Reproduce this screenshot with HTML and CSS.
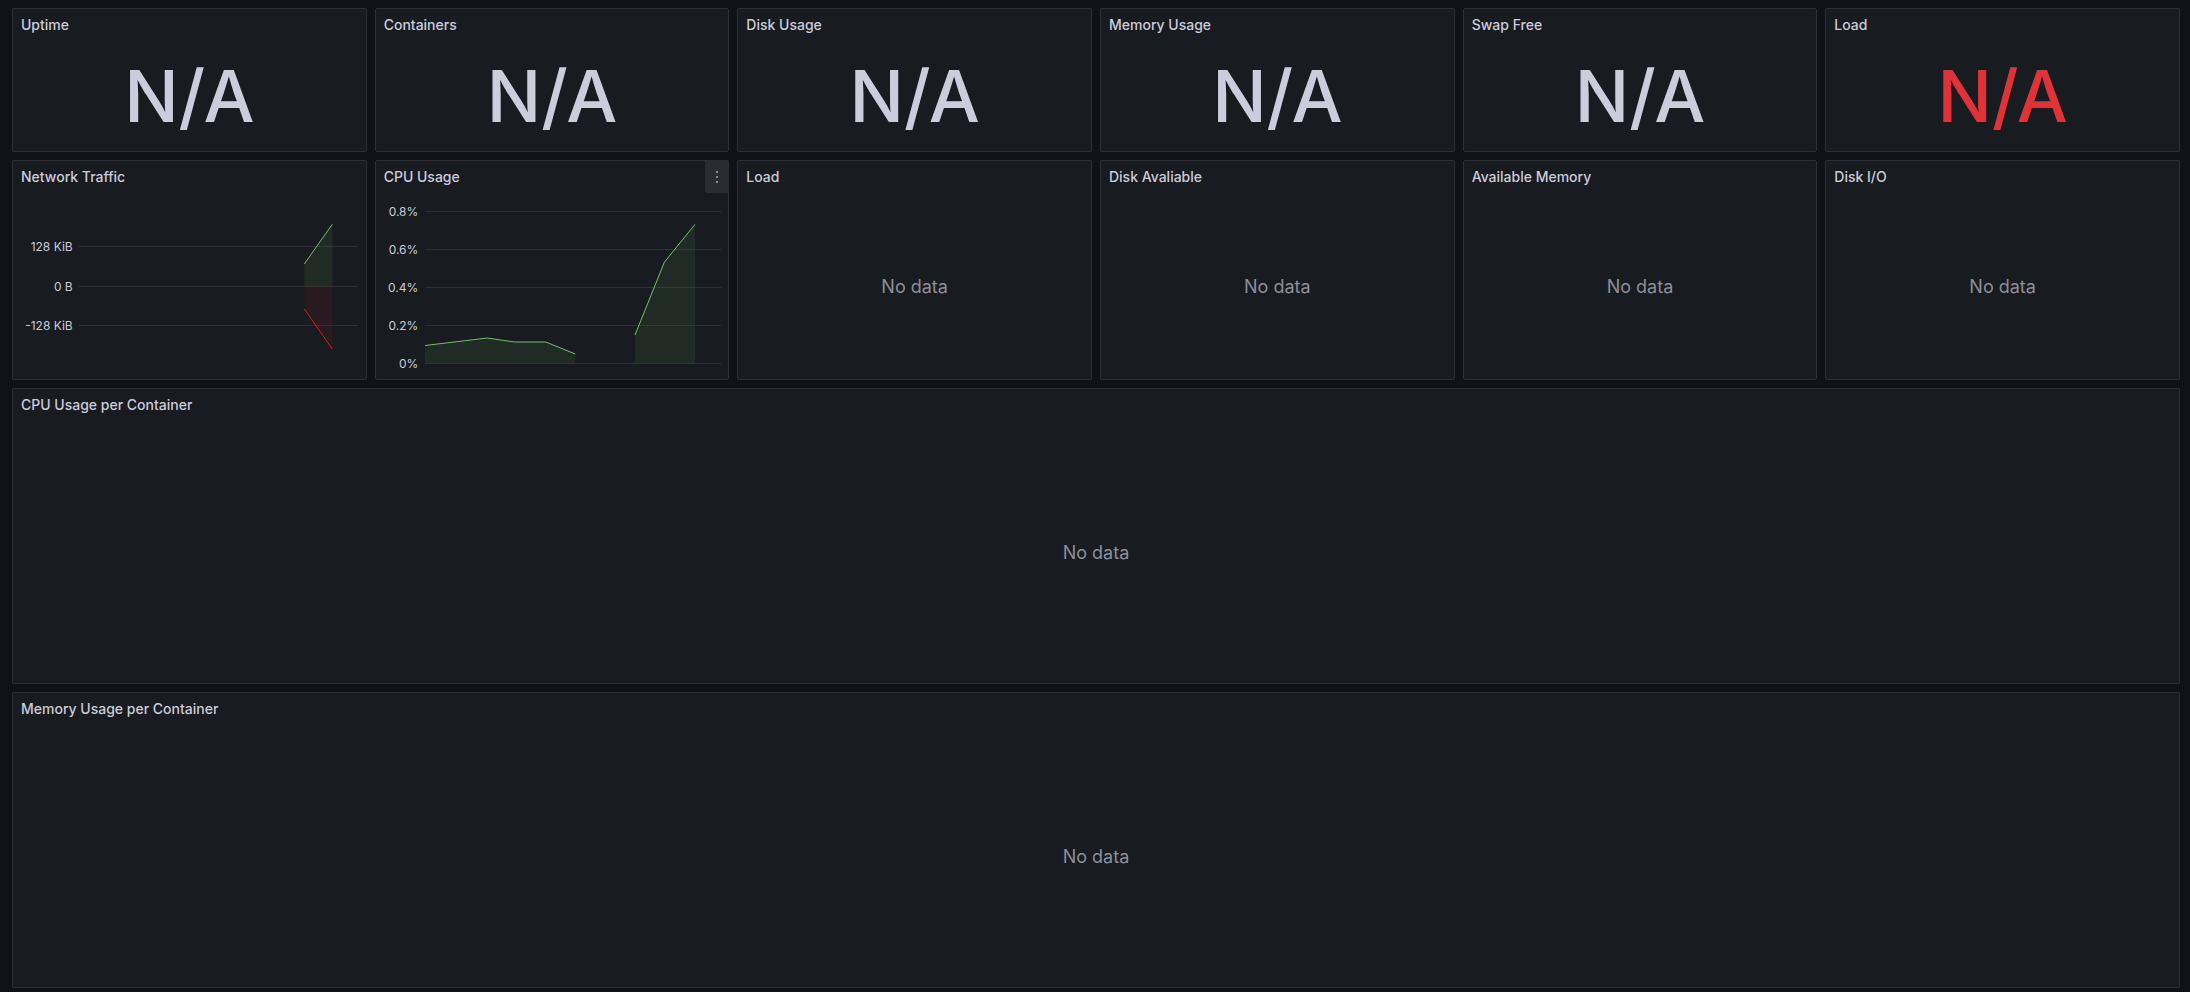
FILE: index.html
```html
<!DOCTYPE html>
<html lang="en">
<head>
<meta charset="utf-8">
<title>Docker Dashboard</title>
<link rel="stylesheet" href="styles.css">
</head>
<body>
<main class="dashboard">
  <section class="panel">
    <header class="panel-header"><h2 class="panel-title">Uptime</h2></header>
    <div class="panel-body"><span class="stat-value">N/A</span></div>
  </section>
  <section class="panel">
    <header class="panel-header"><h2 class="panel-title">Containers</h2></header>
    <div class="panel-body"><span class="stat-value">N/A</span></div>
  </section>
  <section class="panel">
    <header class="panel-header"><h2 class="panel-title">Disk Usage</h2></header>
    <div class="panel-body"><span class="stat-value">N/A</span></div>
  </section>
  <section class="panel">
    <header class="panel-header"><h2 class="panel-title">Memory Usage</h2></header>
    <div class="panel-body"><span class="stat-value">N/A</span></div>
  </section>
  <section class="panel">
    <header class="panel-header"><h2 class="panel-title">Swap Free</h2></header>
    <div class="panel-body"><span class="stat-value">N/A</span></div>
  </section>
  <section class="panel">
    <header class="panel-header"><h2 class="panel-title">Load</h2></header>
    <div class="panel-body"><span class="stat-value stat-red">N/A</span></div>
  </section>

  <section class="panel">
    <header class="panel-header"><h2 class="panel-title">Network Traffic</h2></header>
    <div class="panel-body chart-body">
      <svg class="chart" xmlns="http://www.w3.org/2000/svg">
        <line class="grid" x1="65.5" y1="53.5" x2="344.7" y2="53.5"/>
        <line class="grid" x1="65.5" y1="93.5" x2="344.7" y2="93.5"/>
        <line class="grid" x1="65.5" y1="132.5" x2="344.7" y2="132.5"/>
        <text class="axis" x="59.7" y="53.5">128 KiB</text>
        <text class="axis" x="59.7" y="93.5">0 B</text>
        <text class="axis" x="59.7" y="132.5">-128 KiB</text>
        <polygon class="fill-green" points="291.3,71 319.3,31.3 319.3,93.5 291.3,93.5"/>
        <polygon class="fill-red" points="291.3,93.5 319.3,93.5 319.3,156 291.3,116"/>
        <polyline class="line-green" points="291.3,71 319.3,31.3"/>
        <polyline class="line-red" points="291.3,116 319.3,156"/>
      </svg>
    </div>
  </section>
  <section class="panel">
    <header class="panel-header"><h2 class="panel-title">CPU Usage</h2></header>
    <button class="panel-menu" type="button" aria-label="Menu">
      <svg width="16" height="16" viewBox="0 0 16 16" xmlns="http://www.w3.org/2000/svg"><circle cx="8" cy="3" r="1.1"/><circle cx="8" cy="8" r="1.1"/><circle cx="8" cy="13" r="1.1"/></svg>
    </button>
    <div class="panel-body chart-body">
      <svg class="chart" xmlns="http://www.w3.org/2000/svg">
        <line class="grid" x1="49" y1="18.5" x2="345" y2="18.5"/>
        <line class="grid" x1="49" y1="56.5" x2="345" y2="56.5"/>
        <line class="grid" x1="49" y1="94.5" x2="345" y2="94.5"/>
        <line class="grid" x1="49" y1="132.5" x2="345" y2="132.5"/>
        <line class="grid" x1="49" y1="170.5" x2="345" y2="170.5"/>
        <text class="axis" x="42.3" y="18.5">0.8%</text>
        <text class="axis" x="42.3" y="56.5">0.6%</text>
        <text class="axis" x="42.3" y="94.5">0.4%</text>
        <text class="axis" x="42.3" y="132.5">0.2%</text>
        <text class="axis" x="42.3" y="170.5">0%</text>
        <polygon class="fill-green" points="49,152.5 111.3,145 138.3,149 169.8,149 199.3,161 199.3,170.5 49,170.5"/>
        <polygon class="fill-green" points="259,142 288.3,69.3 319,31.3 319,170.5 259,170.5"/>
        <polyline class="line-green" points="49,152.5 111.3,145 138.3,149 169.8,149 199.3,161"/>
        <polyline class="line-green" points="259,142 288.3,69.3 319,31.3"/>
      </svg>
    </div>
  </section>
  <section class="panel">
    <header class="panel-header"><h2 class="panel-title">Load</h2></header>
    <div class="panel-body"><span class="no-data">No data</span></div>
  </section>
  <section class="panel">
    <header class="panel-header"><h2 class="panel-title">Disk Avaliable</h2></header>
    <div class="panel-body"><span class="no-data">No data</span></div>
  </section>
  <section class="panel">
    <header class="panel-header"><h2 class="panel-title">Available Memory</h2></header>
    <div class="panel-body"><span class="no-data">No data</span></div>
  </section>
  <section class="panel">
    <header class="panel-header"><h2 class="panel-title">Disk I/O</h2></header>
    <div class="panel-body"><span class="no-data">No data</span></div>
  </section>

  <section class="panel panel-wide">
    <header class="panel-header"><h2 class="panel-title">CPU Usage per Container</h2></header>
    <div class="panel-body"><span class="no-data">No data</span></div>
  </section>
  <section class="panel panel-wide">
    <header class="panel-header"><h2 class="panel-title">Memory Usage per Container</h2></header>
    <div class="panel-body"><span class="no-data">No data</span></div>
  </section>
</main>
</body>
</html>
```

FILE: styles.css
```css
* {
  box-sizing: border-box;
}

html, body {
  margin: 0;
  padding: 0;
  background: #111217;
  height: 100%;
  overflow: hidden;
}

body {
  font-family: "Inter", "Roboto", "Liberation Sans", sans-serif;
  color: #ccccdc;
}

.dashboard {
  display: grid;
  grid-template-columns: repeat(6, minmax(0, 1fr));
  grid-template-rows: 144px 220px 296px 296px;
  gap: 8px;
  padding: 8px 10px 4px 12px;
}

.panel {
  position: relative;
  display: flex;
  flex-direction: column;
  min-width: 0;
  background: #181b1f;
  border: 1px solid #2c2f34;
  border-radius: 2px;
}

.panel-wide {
  grid-column: 1 / -1;
}

.panel-header {
  height: 32px;
  flex: 0 0 32px;
  display: flex;
  align-items: center;
  padding: 0 8px;
}

.panel-title {
  margin: 0;
  font-size: 14px;
  font-weight: 500;
  line-height: 1;
  color: #ccccdc;
  white-space: nowrap;
}

.panel-body {
  flex: 1 1 auto;
  min-height: 0;
  display: flex;
  align-items: center;
  justify-content: center;
}

.stat-value {
  font-size: 72px;
  font-weight: 500;
  line-height: 1;
  color: #ccccdc;
}

.stat-red {
  color: #e03339;
}

.no-data {
  font-size: 18px;
  font-weight: 400;
  color: #8e8e9a;
}

.chart-body {
  display: block;
}

.chart {
  display: block;
  width: 100%;
  height: 100%;
}

.grid {
  stroke: #2c2f33;
  stroke-width: 1;
}

.axis {
  font-family: "Inter", "Roboto", "Liberation Sans", sans-serif;
  font-size: 12px;
  fill: #ccccdc;
  text-anchor: end;
  dominant-baseline: central;
}

.fill-green {
  fill: #73bf69;
  fill-opacity: 0.1;
}

.fill-red {
  fill: #c4162a;
  fill-opacity: 0.1;
}

.line-green {
  fill: none;
  stroke: #73bf69;
  stroke-width: 1;
}

.line-red {
  fill: none;
  stroke: #d8200f;
  stroke-width: 1;
}

.panel-menu {
  position: absolute;
  top: -1px;
  right: -1px;
  width: 24px;
  height: 33px;
  padding: 0;
  border: 0;
  border-radius: 2px;
  background: #2a2c31;
  display: flex;
  align-items: center;
  justify-content: center;
  cursor: pointer;
}

.panel-menu svg {
  fill: #9fa0aa;
  width: 16px;
  height: 16px;
}
```
